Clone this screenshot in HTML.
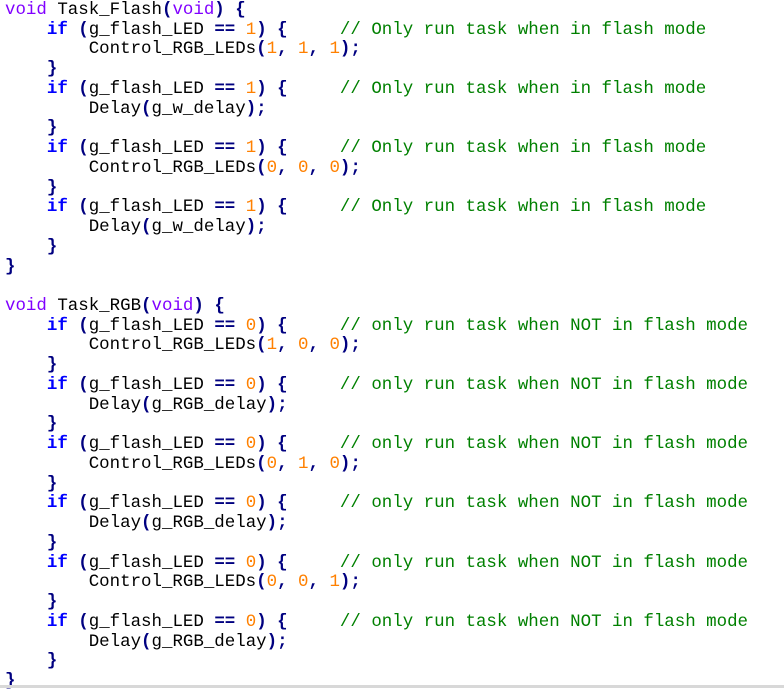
<!DOCTYPE html>
<html><head><style>
html,body{margin:0;padding:0;background:#fff;width:784px;height:688px;overflow:hidden}
pre{margin:0;position:absolute;left:5px;top:1px;font-family:"Liberation Mono",monospace;font-size:17.45px;line-height:19.73px;color:#000}
.k{color:#8000ff}.i{color:#0000ff;font-weight:bold}.o{color:#000080;font-weight:bold}.n{color:#ff8000}.c{color:#008000}
.bar{position:absolute;left:0;top:685px;width:784px;height:3px;background:#d8d8d8}
</style></head><body>
<pre><span class="k">void</span> Task_Flash<span class="o">(</span><span class="k">void</span><span class="o">)</span> <span class="o">{</span>
    <span class="i">if</span> <span class="o">(</span>g_flash_LED <span class="o">==</span> <span class="n">1</span><span class="o">)</span> <span class="o">{</span>     <span class="c">// Only run task when in flash mode</span>
        Control_RGB_LEDs<span class="o">(</span><span class="n">1</span><span class="o">,</span> <span class="n">1</span><span class="o">,</span> <span class="n">1</span><span class="o">);</span>
    <span class="o">}</span>
    <span class="i">if</span> <span class="o">(</span>g_flash_LED <span class="o">==</span> <span class="n">1</span><span class="o">)</span> <span class="o">{</span>     <span class="c">// Only run task when in flash mode</span>
        Delay<span class="o">(</span>g_w_delay<span class="o">);</span>
    <span class="o">}</span>
    <span class="i">if</span> <span class="o">(</span>g_flash_LED <span class="o">==</span> <span class="n">1</span><span class="o">)</span> <span class="o">{</span>     <span class="c">// Only run task when in flash mode</span>
        Control_RGB_LEDs<span class="o">(</span><span class="n">0</span><span class="o">,</span> <span class="n">0</span><span class="o">,</span> <span class="n">0</span><span class="o">);</span>
    <span class="o">}</span>
    <span class="i">if</span> <span class="o">(</span>g_flash_LED <span class="o">==</span> <span class="n">1</span><span class="o">)</span> <span class="o">{</span>     <span class="c">// Only run task when in flash mode</span>
        Delay<span class="o">(</span>g_w_delay<span class="o">);</span>
    <span class="o">}</span>
<span class="o">}</span>

<span class="k">void</span> Task_RGB<span class="o">(</span><span class="k">void</span><span class="o">)</span> <span class="o">{</span>
    <span class="i">if</span> <span class="o">(</span>g_flash_LED <span class="o">==</span> <span class="n">0</span><span class="o">)</span> <span class="o">{</span>     <span class="c">// only run task when NOT in flash mode</span>
        Control_RGB_LEDs<span class="o">(</span><span class="n">1</span><span class="o">,</span> <span class="n">0</span><span class="o">,</span> <span class="n">0</span><span class="o">);</span>
    <span class="o">}</span>
    <span class="i">if</span> <span class="o">(</span>g_flash_LED <span class="o">==</span> <span class="n">0</span><span class="o">)</span> <span class="o">{</span>     <span class="c">// only run task when NOT in flash mode</span>
        Delay<span class="o">(</span>g_RGB_delay<span class="o">);</span>
    <span class="o">}</span>
    <span class="i">if</span> <span class="o">(</span>g_flash_LED <span class="o">==</span> <span class="n">0</span><span class="o">)</span> <span class="o">{</span>     <span class="c">// only run task when NOT in flash mode</span>
        Control_RGB_LEDs<span class="o">(</span><span class="n">0</span><span class="o">,</span> <span class="n">1</span><span class="o">,</span> <span class="n">0</span><span class="o">);</span>
    <span class="o">}</span>
    <span class="i">if</span> <span class="o">(</span>g_flash_LED <span class="o">==</span> <span class="n">0</span><span class="o">)</span> <span class="o">{</span>     <span class="c">// only run task when NOT in flash mode</span>
        Delay<span class="o">(</span>g_RGB_delay<span class="o">);</span>
    <span class="o">}</span>
    <span class="i">if</span> <span class="o">(</span>g_flash_LED <span class="o">==</span> <span class="n">0</span><span class="o">)</span> <span class="o">{</span>     <span class="c">// only run task when NOT in flash mode</span>
        Control_RGB_LEDs<span class="o">(</span><span class="n">0</span><span class="o">,</span> <span class="n">0</span><span class="o">,</span> <span class="n">1</span><span class="o">);</span>
    <span class="o">}</span>
    <span class="i">if</span> <span class="o">(</span>g_flash_LED <span class="o">==</span> <span class="n">0</span><span class="o">)</span> <span class="o">{</span>     <span class="c">// only run task when NOT in flash mode</span>
        Delay<span class="o">(</span>g_RGB_delay<span class="o">);</span>
    <span class="o">}</span>
<span class="o">}</span></pre>
<div class="bar"></div>
</body></html>
